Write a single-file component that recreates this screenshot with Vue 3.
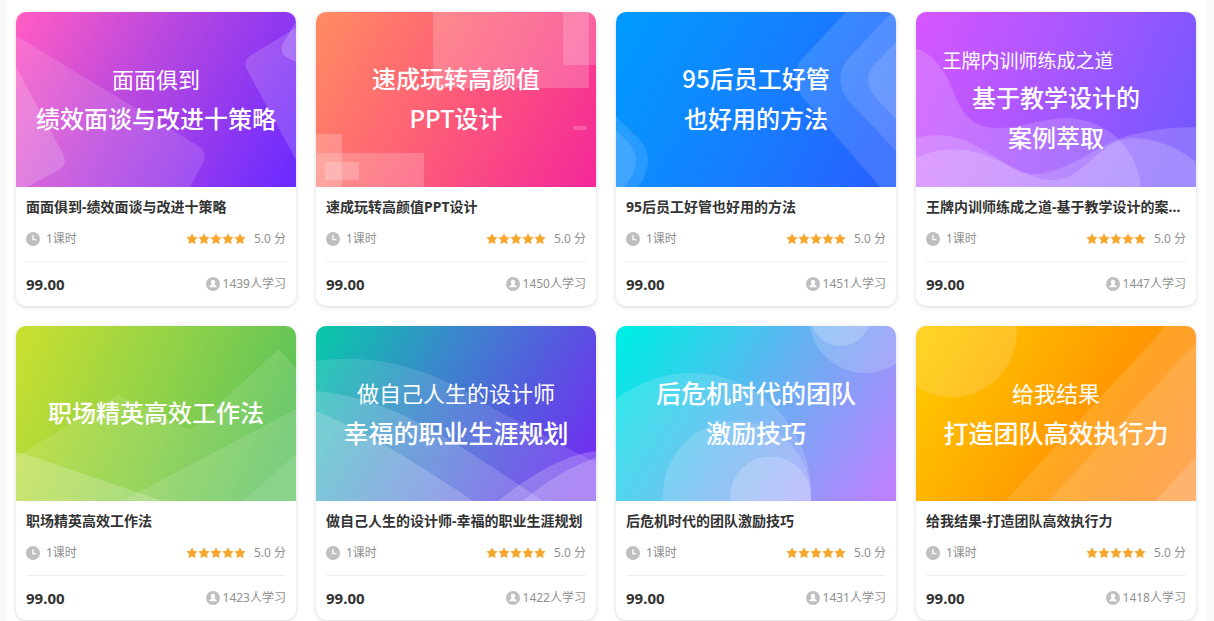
<script setup>
const courses = [
  {
    id: 'review', title: '面面俱到-绩效面谈与改进十策略', learners: 1439,
    lines: [{ text: '面面俱到', kind: 'sub' }, { text: '绩效面谈与改进十策略', kind: 'main' }],
    shapes: [
      { d: 'M0 24L181 133Q192 140 187 151L174 175H0Z', o: 0.13 },
      { d: 'M0 55L47 142Q52 152 43 158L11 175H0Z', o: 0.17 },
      { d: 'M280 16L235 43Q226 49 231 58L280 148Z', o: 0.16 },
      { d: 'M280 9L267 32Q263 41 270 45L280 50Z', o: 0.19 },
    ],
  },
  {
    id: 'ppt', title: '速成玩转高颜值PPT设计', learners: 1450,
    lines: [{ text: '速成玩转高颜值', kind: 'main' }, { text: 'PPT设计', kind: 'main' }],
    shapes: [
      { d: 'M117 0H273V76H117Z', o: 0.2 },
      { d: 'M247 0H280V53H247Z', o: 0.18 },
      { d: 'M257 114H271V118H257Z', o: 0.2 },
      { d: 'M0 122H26V175H0Z', o: 0.2 },
      { d: 'M0 141H108V175H0Z', o: 0.2 },
      { d: 'M9 150H43V168H9Z', o: 0.2 },
    ],
  },
  {
    id: 'manage', title: '95后员工好管也好用的方法', learners: 1451,
    lines: [{ text: '95后员工好管', kind: 'main' }, { text: '也好用的方法', kind: 'main' }],
    shapes: [
      { d: 'M230 0L184 49Q173 66 187 86L264 175H280V0Z', o: 0.13 },
      { d: 'M276 0L231 48Q217 68 232 88L280 139V0Z', o: 0.12 },
      { d: 'M280 30L258 53Q246 68 259 85L280 107Z', o: 0.13 },
      { d: 'M0 104L26 130Q40 150 22 175H0Z', o: 0.12 },
      { d: 'M0 118L13 131Q29 151 8 175H0Z', o: 0.12 },
    ],
  },
  {
    id: 'teach', title: '王牌内训师练成之道-基于教学设计的案例萃取', learners: 1447,
    lines: [{ text: '王牌内训师练成之道', kind: 'lead' }, { text: '基于教学设计的', kind: 'main' }, { text: '案例萃取', kind: 'main' }],
    shapes: [
      { d: 'M0 36C20 43 31 63 38 81C46 103 58 116 82 116C106 116 128 106 150 106C187 107 221 132 225 175H0Z', o: 0.17 },
      { d: 'M0 126C37 116 58 133 81 146C94 154 102 162 118 162C151 162 185 129 219 122Q247 115 280 115V175H0Z', o: 0.17 },
      { d: 'M0 146C33 130 63 139 88 151C106 160 121 168 139 168C169 167 183 127 216 126Q250 126 280 150V175H0Z', o: 0.18 },
    ],
  },
  {
    id: 'elite', title: '职场精英高效工作法', learners: 1423,
    lines: [{ text: '职场精英高效工作法', kind: 'main' }],
    shapes: [
      { d: 'M0 131L102 69L174 104L263 23L280 42V175H0Z', o: 0.11 },
      { d: 'M0 126L6 127L147 175H0Z', o: 0.2 },
      { d: 'M280 83L106 175H280Z', o: 0.12 },
      { d: 'M280 128L227 175H280Z', o: 0.1 },
    ],
  },
  {
    id: 'career', title: '做自己人生的设计师-幸福的职业生涯规划', learners: 1422,
    lines: [{ text: '做自己人生的设计师', kind: 'sub' }, { text: '幸福的职业生涯规划', kind: 'wide' }],
    shapes: [
      { d: 'M0 35C75 24 135 54 180 84L280 137V175H0Z', o: 0.12 },
      { d: 'M0 65C78 72 139 116 227 175H0Z', o: 0.16 },
      { d: 'M0 85C42 102 89 129 157 175H0Z', o: 0.19 },
      { d: 'M182 175C212 151 246 129 280 125V175Z', o: 0.2 },
      { d: 'M207 175C229 156 254 140 280 132V175Z', o: 0.2 },
    ],
  },
  {
    id: 'team', title: '后危机时代的团队激励技巧', learners: 1431,
    lines: [{ text: '后危机时代的团队', kind: 'wide' }, { text: '激励技巧', kind: 'wide' }],
    circles: [
      { x: 75, y: 167, r: 120, o: 0.15 },
      { x: 121, y: 169, r: 74, o: 0.15 },
      { x: 154.5, y: 171, r: 40.5, o: 0.2 },
      { x: 249, y: -9, r: 56, o: 0.17 },
      { x: 224.5, y: -10, r: 30, o: 0.2 },
    ],
  },
  {
    id: 'result', title: '给我结果-打造团队高效执行力', learners: 1418,
    lines: [{ text: '给我结果', kind: 'sub' }, { text: '打造团队高效执行力', kind: 'wide' }],
    shapes: [
      { d: 'M250 0L89 175H280V0Z', o: 0.13 },
      { d: 'M280 17L132 175H280Z', o: 0.12 },
      { d: 'M280 130L239 175H280Z', o: 0.16 },
    ],
    circles: [{ x: 36, y: 6, r: 65, o: 0.15 }],
  },
]
</script>

<template>
  <main class="page">
    <ul class="grid">
      <li v-for="c in courses" :key="c.id" class="card">
        <div class="banner" :class="c.id">
          <svg class="art" viewBox="0 0 280 175" preserveAspectRatio="none" fill="#fff" aria-hidden="true">
            <path v-for="(s, i) in c.shapes" :key="'p' + i" :d="s.d" :fill-opacity="s.o" />
            <circle v-for="(s, i) in c.circles" :key="'c' + i" :cx="s.x" :cy="s.y" :r="s.r" :fill-opacity="s.o" />
          </svg>
          <p class="slogan">
            <span v-for="l in c.lines" :key="l.text" :class="l.kind">{{ l.text }}</span>
          </p>
        </div>
        <div class="body">
          <h3 class="title"><a href="#">{{ c.title }}</a></h3>
          <div class="meta">
            <span class="lessons">
              <svg class="icon" viewBox="0 0 14 14" aria-hidden="true">
                <circle cx="7" cy="7" r="7" fill="#bfbfbf" />
                <path d="M7 3.2V7.6H10.4" fill="none" stroke="#fff" stroke-width="1.4" />
              </svg>
              1课时
            </span>
            <span class="rating">
              <span class="stars">
                <svg v-for="n in 5" :key="n" class="star" viewBox="0 0 12 12" aria-hidden="true">
                  <path d="M6 .9L7.6 4.1L11.1 4.6L8.6 7.1L9.2 10.6L6 9L2.8 10.6L3.4 7.1L.9 4.6L4.4 4.1Z" fill="#f5a62b" stroke="#f5a62b" stroke-width=".6" stroke-linejoin="round" />
                </svg>
              </span>
              5.0 分
            </span>
          </div>
          <div class="foot">
            <strong class="price">99.00</strong>
            <span class="learners">
              <svg class="icon" viewBox="0 0 14 14" aria-hidden="true">
                <circle cx="7" cy="7" r="7" fill="#bfbfbf" />
                <path d="M7 2.8C8.5 2.8 9.3 3.9 9.2 5.2C9.1 6.2 8.7 6.8 8.2 7.3C8.2 8 10.7 8.2 10.8 10.2H3.2C3.3 8.2 5.8 8 5.8 7.3C5.3 6.8 4.9 6.2 4.8 5.2C4.7 3.9 5.5 2.8 7 2.8Z" fill="#fff" />
              </svg>
              {{ c.learners }}人学习
            </span>
          </div>
        </div>
      </li>
    </ul>
  </main>
</template>

<style>
body {
  background: #f9f9f9;
}
</style>

<style scoped>
.page {
  box-sizing: border-box;
  min-height: 100vh;
  margin: 0 8px 0 6px;
  padding: 12px 10px 0;
  background: #fff;
  color: #333;
  font-family: "Noto Sans", "Noto Sans CJK SC", sans-serif;
}
.grid {
  display: grid;
  grid-template-columns: repeat(4, minmax(0, 1fr));
  gap: 20px;
  margin: 0;
  padding: 0;
  list-style: none;
}
.card {
  overflow: hidden;
  border-radius: 10px;
  background: #fff;
  box-shadow: 0 1px 4px rgba(0, 0, 0, 0.16);
}
.banner {
  position: relative;
  display: flex;
  align-items: center;
  justify-content: center;
  aspect-ratio: 8 / 5;
  overflow: hidden;
}
.review { background: linear-gradient(118deg, #ff5cc4 2%, #b948df 43%, #6d2bff 97%); }
.ppt { background: linear-gradient(118deg, #ff8a62 2%, #fd5c78 48%, #f52a98 97%); }
.manage { background: linear-gradient(118deg, #0099ff 4%, #1580ff 50%, #2762ff 92%); }
.teach { background: linear-gradient(112deg, #d356ff 4%, #a557ff 50%, #7857ff 90%); }
.elite { background: linear-gradient(112deg, #c8df30 3%, #8ed14a 50%, #5ac25a 90%); }
.career { background: linear-gradient(118deg, #0cc4ac 4%, #3989cb 38%, #6f30f0 92%); }
.team { background: linear-gradient(122deg, #00ede5 4%, #60b4f1 48%, #bd80ff 97%); }
.result { background: linear-gradient(122deg, #ffcc00 4%, #ff9900 58%, #ff8a22 97%); }
.art {
  position: absolute;
  inset: 0;
  width: 100%;
  height: 100%;
}
.slogan {
  position: relative;
  display: flex;
  flex-direction: column;
  align-items: center;
  margin: 0;
  padding-bottom: 4px;
  color: #fff;
  font-family: "Noto Sans CJK SC", sans-serif;
  font-size: 24px;
  line-height: 40px;
  white-space: nowrap;
}
.main,
.wide {
  font-weight: 500;
}
.wide {
  font-size: 25px;
}
.sub {
  font-size: 22px;
  font-weight: 400;
}
.lead {
  align-self: flex-start;
  margin-right: 56px;
  padding-top: 4px;
  font-size: 19px;
  font-weight: 400;
  line-height: 34px;
}
.body {
  padding: 10px 10px 12px;
}
.title {
  overflow: hidden;
  margin: 0;
  font-size: 14px;
  font-weight: 700;
  line-height: 20px;
  text-overflow: ellipsis;
  white-space: nowrap;
}
.title a {
  color: inherit;
  text-decoration: none;
}
.meta,
.foot {
  display: flex;
  align-items: center;
  justify-content: space-between;
  color: #909090;
  font-size: 12px;
  line-height: 20px;
}
.meta {
  padding: 12px 0;
  border-bottom: 1px solid #eee;
}
.foot {
  padding-top: 12px;
}
.lessons,
.rating,
.learners {
  display: flex;
  align-items: center;
}
.lessons {
  gap: 6px;
}
.rating {
  gap: 8px;
}
.learners {
  gap: 3px;
}
.stars {
  display: flex;
}
.star {
  width: 12px;
  height: 12px;
}
.icon {
  width: 14px;
  height: 14px;
}
.price {
  color: #333;
  font-size: 15px;
}
</style>
